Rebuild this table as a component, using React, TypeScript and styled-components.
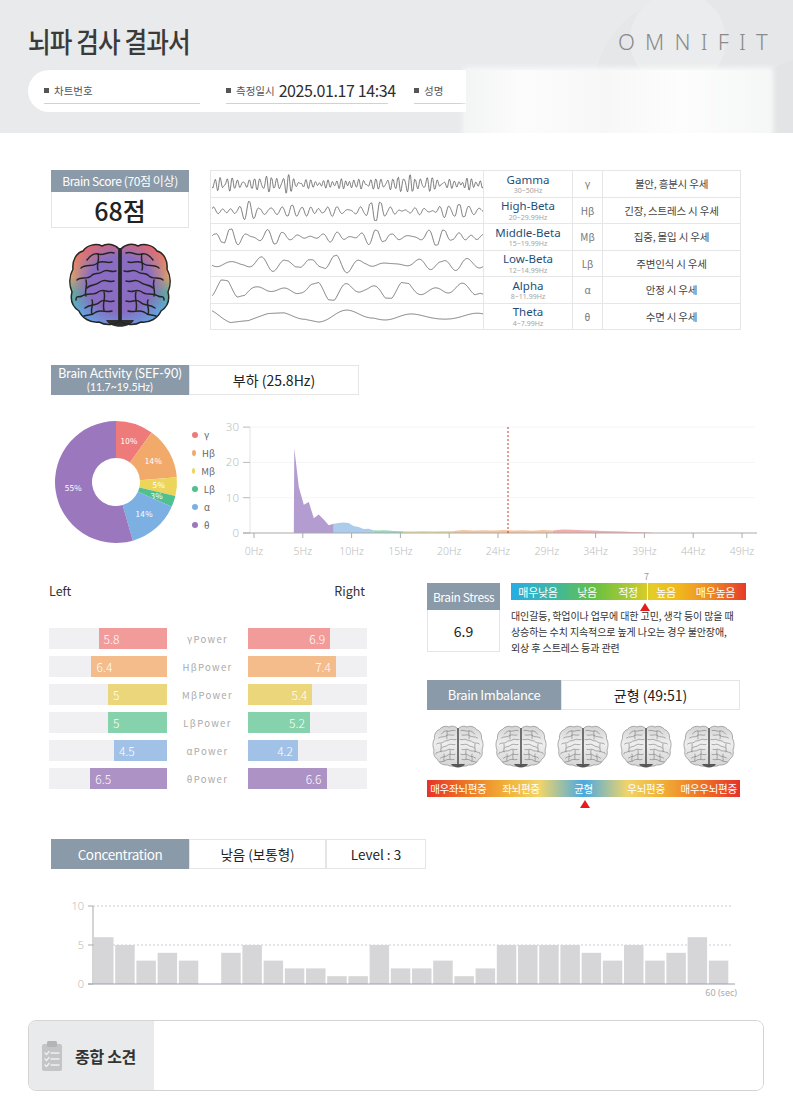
import React from 'react';
import styled, { createGlobalStyle } from 'styled-components';

const GlobalStyle = createGlobalStyle`
  html, body { margin: 0; padding: 0; background: #fff; }
  body { font-family: "Noto Sans CJK KR", "Noto Sans", sans-serif; color: #333; }
  * { box-sizing: border-box; }
  svg { display: block; }
`;

const SLATE = '#8a9aa8';

/* ---------------- helpers ---------------- */
function mulberry32(a: number) {
  return function () {
    a |= 0;
    a = (a + 0x6d2b79f5) | 0;
    let t = Math.imul(a ^ (a >>> 15), 1 | a);
    t = (t + Math.imul(t ^ (t >>> 7), 61 | t)) ^ t;
    return ((t ^ (t >>> 14)) >>> 0) / 4294967296;
  };
}

function wavePath(seed: number, period: number, amp: number, envP: number, w = 271, h = 26) {
  const r = mulberry32(seed);
  const comps = Array.from({ length: 3 }, () => ({
    p: period * (0.75 + r() * 0.5),
    ph: r() * Math.PI * 2,
    a: 0.6 + r() * 0.4,
  }));
  const e1 = { p: envP * (0.8 + r() * 0.4), ph: r() * 6.28 };
  const e2 = { p: envP * 0.45 * (0.8 + r() * 0.4), ph: r() * 6.28 };
  const sa = comps.reduce((s, c) => s + c.a, 0);
  let d = '';
  for (let x = 0; x <= w; x += 0.5) {
    let y = 0;
    for (const c of comps) y += c.a * Math.sin((2 * Math.PI * x) / c.p + c.ph);
    y /= sa * 0.6;
    const env =
      0.3 +
      0.7 *
        Math.abs(
          0.6 * Math.sin((2 * Math.PI * x) / e1.p + e1.ph) + 0.4 * Math.sin((2 * Math.PI * x) / e2.p + e2.ph)
        );
    const yy = h / 2 - Math.max(-1.2, Math.min(1.2, y)) * amp * env;
    d += (x === 0 ? 'M' : 'L') + x.toFixed(1) + ',' + yy.toFixed(2);
  }
  return d;
}

function arcPath(cx: number, cy: number, r0: number, r1: number, a0: number, a1: number) {
  const p = (r: number, a: number) => [cx + r * Math.sin(a), cy - r * Math.cos(a)];
  const large = a1 - a0 > Math.PI ? 1 : 0;
  const [x0, y0] = p(r1, a0);
  const [x1, y1] = p(r1, a1);
  const [x2, y2] = p(r0, a1);
  const [x3, y3] = p(r0, a0);
  return `M${x0},${y0} A${r1},${r1} 0 ${large} 1 ${x1},${y1} L${x2},${y2} A${r0},${r0} 0 ${large} 0 ${x3},${y3} Z`;
}

/* ---------------- layout ---------------- */
const Page = styled.div`
  width: 793px;
  min-height: 1118px;
  background: #fff;
  overflow: hidden;
`;

const Header = styled.header`
  position: relative;
  height: 133px;
  background: #e8eaeb;
  overflow: hidden;
`;

const HeaderDecor = styled.svg`
  position: absolute;
  right: 0;
  top: 0;
`;

const TitleRow = styled.div`
  position: relative;
  display: flex;
  justify-content: space-between;
  align-items: center;
  height: 70px;
  padding: 12px 25px 0 28px;
`;

const Title = styled.h1`
  margin: 0;
  font-size: 28px;
  font-weight: 500;
  letter-spacing: -1px;
  color: #3a3a3a;
  transform: scaleX(0.88);
  transform-origin: left center;
  white-space: nowrap;
`;

const Logo = styled.div`
  font-family: "Noto Sans", sans-serif;
  font-size: 22px;
  font-weight: 300;
  letter-spacing: 10.2px;
  margin-right: -10px;
  color: #8a8a8a;
`;

const InfoPill = styled.div`
  position: relative;
  display: flex;
  align-items: flex-end;
  gap: 26px;
  height: 42px;
  margin: 0 22px 0 28px;
  padding: 0 0 8px 16px;
  background: #fff;
  border-radius: 21px;
`;

const Field = styled.div<{ $w: number }>`
  display: flex;
  align-items: center;
  width: ${(p) => p.$w}px;
  height: 24px;
  border-bottom: 1px solid #d2d2d2;
  padding-bottom: 3px;
  white-space: nowrap;
`;

const FieldLabel = styled.span`
  font-size: 10.5px;
  color: #555;
  display: flex;
  align-items: center;
  &::before {
    content: '';
    width: 5px;
    height: 5px;
    background: #555;
    margin-right: 5px;
  }
`;

const FieldValue = styled.span`
  margin-left: 4px;
  font-size: 16px;
  letter-spacing: -0.4px;
  color: #2f2f2f;
`;

const Redaction = styled.div`
  position: absolute;
  left: 466px;
  top: 70px;
  width: 305px;
  height: 65px;
  background: linear-gradient(90deg, #f3f4f4 0%, #fcfcfc 18%, #f7f7f7 45%, #fdfdfd 70%, #f5f6f6 100%);
  box-shadow: 0 0 6px 2px rgba(255, 255, 255, 0.8);
`;

/* label/value boxes */
const LabelBox = styled.div<{ $w: number; $h: number; $fs: number }>`
  width: ${(p) => p.$w}px;
  height: ${(p) => p.$h}px;
  background: ${SLATE};
  color: #fff;
  font-size: ${(p) => p.$fs}px;
  letter-spacing: -0.4px;
  line-height: 1.1;
  display: flex;
  flex-direction: column;
  align-items: center;
  justify-content: center;
  white-space: nowrap;
`;

const LatinLine = styled.span<{ $fs: number }>`
  font-family: Lato, "Noto Sans", sans-serif;
  font-size: ${(p) => p.$fs}px;
  line-height: 1.2;
  letter-spacing: 0;
  display: block;
`;

const ValueBox = styled.div<{ $w: number; $h: number; $fs: number; $noTop?: boolean; $bold?: boolean }>`
  width: ${(p) => p.$w}px;
  height: ${(p) => p.$h}px;
  border: 1px solid #e5e5e5;
  ${(p) => (p.$noTop ? 'border-top: none;' : '')}
  background: #fff;
  font-size: ${(p) => p.$fs}px;
  font-weight: ${(p) => (p.$bold ? 500 : 400)};
  color: #222;
  display: flex;
  align-items: center;
  justify-content: center;
  white-space: nowrap;
`;

/* Section 1 */
const ScoreSection = styled.section`
  display: flex;
  gap: 21px;
  margin: 37px 0 0 51px;
`;

const ScoreCol = styled.div`
  width: 138px;
  display: flex;
  flex-direction: column;
`;

const BrainHolder = styled.div`
  margin: 12px 0 0 17px;
`;

const WaveGrid = styled.div`
  display: grid;
  grid-template-columns: 273px 89px 30px 138px;
  grid-template-rows: repeat(6, 1fr);
  height: 160px;
  border-top: 1px solid #e6e6e6;
  border-left: 1px solid #e6e6e6;
`;

const GridCell = styled.div<{ $align?: string }>`
  border-right: 1px solid #e6e6e6;
  border-bottom: 1px solid #e6e6e6;
  display: flex;
  flex-direction: column;
  align-items: ${(p) => p.$align || 'center'};
  justify-content: center;
  overflow: hidden;
`;

const WaveName = styled.span`
  font-family: "Noto Sans", sans-serif;
  font-size: 11.5px;
  color: #1e4f78;
  line-height: 1.37;
  display: block;
  margin-bottom: -1px;
`;

const WaveRange = styled.span`
  font-family: "Noto Sans", sans-serif;
  font-size: 7px;
  color: #a5a5a5;
  line-height: 1.37;
  display: block;
`;

const WaveSymbol = styled.span`
  font-size: 10px;
  color: #777;
`;

const WaveDesc = styled.span`
  font-size: 10.5px;
  color: #444;
  letter-spacing: -0.2px;
`;

/* Section 2 */
const ActivitySection = styled.section`
  margin: 35px 0 0 51px;
`;

const BoxRow = styled.div`
  display: flex;
`;

const ChartRow = styled.div`
  display: flex;
  align-items: flex-start;
  margin-top: 20px;
`;

const Legend = styled.ul`
  list-style: none;
  margin: 11px 0 0 11px;
  padding: 0;
  width: 23px;
`;

const LegendItem = styled.li<{ $c: string }>`
  height: 18px;
  display: flex;
  align-items: center;
  font-size: 9.5px;
  color: #666;
  white-space: nowrap;
  &::before {
    content: '';
    width: 6px;
    height: 6px;
    border-radius: 50%;
    background: ${(p) => p.$c};
    margin-right: 6px;
  }
`;

/* Section 3 */
const BalanceSection = styled.section`
  display: flex;
  gap: 60px;
  margin: 10px 0 0 49px;
`;

const PowerCol = styled.div`
  width: 318px;
`;

const LRHead = styled.div`
  display: flex;
  justify-content: space-between;
  margin-top: 8px;
  height: 16px;
  font-size: 12.5px;
  color: #333;
  line-height: 16px;
  padding-right: 2px;
`;

const PowerList = styled.div`
  display: flex;
  flex-direction: column;
  gap: 7px;
  margin-top: 29px;
`;

const PowerRow = styled.div`
  display: grid;
  grid-template-columns: 118px 81px 119px;
  height: 21px;
`;

const Track = styled.div<{ $side: 'L' | 'R' }>`
  background: #f0f0f3;
  display: flex;
  justify-content: ${(p) => (p.$side === 'L' ? 'flex-end' : 'flex-start')};
`;

const Bar = styled.div<{ $c: string; $side: 'L' | 'R' }>`
  height: 100%;
  background: ${(p) => p.$c};
  color: #fff;
  font-size: 12px;
  font-weight: 300;
  display: flex;
  align-items: center;
  justify-content: ${(p) => (p.$side === 'L' ? 'flex-start' : 'flex-end')};
  padding: 0 5px;
`;

const PowerLabel = styled.div`
  display: flex;
  align-items: center;
  justify-content: center;
  font-size: 9.5px;
  letter-spacing: 1.3px;
  color: #aaa;
  white-space: nowrap;
`;

const RightCol = styled.div`
  width: 319px;
`;

const StressBlock = styled.div`
  display: flex;
  gap: 11px;
  margin-top: 8px;
`;

const StressCol = styled.div`
  width: 73px;
  display: flex;
  flex-direction: column;
`;

const ScaleCol = styled.div`
  width: 235px;
`;

const StressScale = styled.div`
  position: relative;
  height: 17px;
  display: grid;
  grid-template-columns: 54px 44px 38px 38px 1fr;
  background: linear-gradient(90deg, #27ade3 0%, #3cb8a5 18%, #66c043 35%, #a9c934 50%, #e6cc26 60%, #f1b51f 72%, #ee8a22 85%, #e6392b 100%);
`;

const ScaleText = styled.span<{ $fs?: number }>`
  color: #fff;
  font-size: ${(p) => p.$fs || 11}px;
  letter-spacing: -0.3px;
  display: flex;
  align-items: center;
  justify-content: center;
  white-space: nowrap;
`;

const Marker = styled.div<{ $left: number }>`
  position: absolute;
  left: ${(p) => p.$left}px;
  top: 0;
  bottom: 0;
  width: 1px;
  background: rgba(255, 255, 255, 0.9);
`;

const MarkerNum = styled.span`
  position: absolute;
  left: -3px;
  top: -13px;
  font-size: 9px;
  color: #999;
`;

const Triangle = styled.div<{ $left: number }>`
  position: absolute;
  left: ${(p) => p.$left - 5}px;
  top: 20px;
  width: 0;
  height: 0;
  border-left: 5px solid transparent;
  border-right: 5px solid transparent;
  border-bottom: 8px solid #e31d1d;
`;

const StressDesc = styled.p`
  margin: 8px 0 0;
  font-size: 10px;
  line-height: 16px;
  color: #333;
  white-space: nowrap;
  letter-spacing: -0.1px;
`;

const ImbalanceBlock = styled.div`
  margin-top: 24px;
`;

const BrainsRow = styled.div`
  display: flex;
  justify-content: space-around;
  align-items: center;
  width: 313px;
  margin-top: 15px;
  height: 42px;
`;

const ImbalanceScale = styled.div`
  position: relative;
  width: 313px;
  height: 17px;
  margin-top: 13px;
  display: grid;
  grid-template-columns: repeat(5, 1fr);
  background: linear-gradient(90deg, #e5332a 0%, #ee7d27 14%, #f1b43a 26%, #f0d46a 36%, #4aa9e2 50%, #f0d46a 64%, #f1b43a 74%, #ee7d27 86%, #e5332a 100%);
`;

/* Section 4 */
const ConcentrationSection = styled.section`
  margin: 42px 0 0 51px;
`;

const ConcChart = styled.svg`
  display: block;
  margin-top: 26px;
`;

/* Section 5 */
const Summary = styled.section`
  display: flex;
  height: 71px;
  margin: 15px 29px 0 28px;
  border: 1.5px solid #d4d4d4;
  border-radius: 8px;
  overflow: hidden;
`;

const SummaryHead = styled.div`
  width: 125px;
  background: #e8eaeb;
  display: flex;
  align-items: center;
  gap: 12px;
  padding-left: 12px;
`;

const SummaryTitle = styled.span`
  font-size: 16px;
  font-weight: 700;
  color: #333;
  letter-spacing: -0.3px;
`;

const SummaryBody = styled.div`
  flex: 1;
  background: #fff;
`;

/* ---------------- drawings ---------------- */
const HEMI =
  'M51,9 C47,4 39,3 34,6 C28,3 19,5 15,11 C8,13 4,21 5,29 C1,36 1,45 4,52 C2,60 5,67 11,71 C14,78 22,83 31,82 C38,86 47,85 51,81 Z';
const GYRI = [
  'M46,13 C40,11 36,16 30,14 C26,13 22,16 19,20',
  'M44,22 C38,24 34,19 28,24 C24,27 18,24 13,28',
  'M48,31 C42,33 40,28 34,32 C30,35 26,32 23,36 C19,40 13,36 9,40',
  'M46,41 C40,43 38,38 32,42 C28,46 22,44 19,48',
  'M44,51 C38,53 36,48 30,52 C26,56 20,52 14,56 C10,58 8,55 8,60',
  'M46,61 C40,63 36,58 32,62 C28,66 22,64 17,68',
  'M44,71 C38,73 34,69 28,72 C24,76 20,74 16,76',
  'M30,14 C32,19 28,25 30,30',
  'M18,40 C20,46 16,51 18,56',
  'M36,52 C38,58 34,64 36,70',
  'M24,60 C26,64 22,70 24,74',
];

const Brain: React.FC<{ variant: 'color' | 'grey'; w: number; h: number }> = ({ variant, w, h }) => {
  const isColor = variant === 'color';
  const id = isColor ? 'bc' : 'bg';
  const stroke = isColor ? '#262626' : '#6e6e6e';
  const sw = isColor ? 1.5 : 1.1;
  return (
    <svg width={w} height={h} viewBox="0 0 104 88">
      <defs>
        <clipPath id={`${id}Clip`}>
          <path d={HEMI} />
          <path d={HEMI} transform="translate(104,0) scale(-1,1)" />
        </clipPath>
        <linearGradient id={`${id}Lin`} x1="0" y1="0" x2="0" y2="1">
          {isColor ? (
            <>
              <stop offset="0%" stopColor="#e8566c" />
              <stop offset="22%" stopColor="#ee8160" />
              <stop offset="42%" stopColor="#f1ad52" />
              <stop offset="60%" stopColor="#4fc08f" />
              <stop offset="80%" stopColor="#5aaee0" />
              <stop offset="100%" stopColor="#6aa3ea" />
            </>
          ) : (
            <>
              <stop offset="0%" stopColor="#cfcfcf" />
              <stop offset="45%" stopColor="#efefef" />
              <stop offset="100%" stopColor="#d2d2d2" />
            </>
          )}
        </linearGradient>
        <radialGradient id={`${id}Rad`} cx="0.5" cy="0.5" r="0.5">
          <stop offset="0%" stopColor="#8a6cc2" stopOpacity="1" />
          <stop offset="58%" stopColor="#8a6cc2" stopOpacity="1" />
          <stop offset="100%" stopColor="#8a6cc2" stopOpacity="0" />
        </radialGradient>
      </defs>
      <g clipPath={`url(#${id}Clip)`}>
        <rect x="0" y="0" width="104" height="88" fill={`url(#${id}Lin)`} />
        {isColor && <ellipse cx="52" cy="44" rx="54" ry="48" fill={`url(#${id}Rad)`} />}
      </g>
      <path d="M38,80 C42,89 62,89 66,80 Z" fill={isColor ? '#2e2e2e' : '#555'} />
      <rect x="50.5" y="8" width="3" height="76" fill={isColor ? '#2a2a2a' : '#4a4a4a'} />
      {[false, true].map((m) => (
        <g
          key={String(m)}
          transform={m ? 'translate(104,0) scale(-1,1)' : undefined}
          fill="none"
          stroke={stroke}
          strokeWidth={sw}
          strokeLinecap="round"
        >
          <path d={HEMI} />
          {GYRI.map((g, i) => (
            <path key={i} d={g} />
          ))}
        </g>
      ))}
    </svg>
  );
};

const ClipboardIcon = () => (
  <svg width="22" height="32" viewBox="0 0 22 32">
    <rect x="1" y="4" width="20" height="27" rx="2" fill="#c3c5c7" />
    <rect x="6" y="1" width="10" height="6" rx="1.5" fill="#b3b5b7" />
    <g stroke="#eef0f1" strokeWidth="1.4" fill="none" strokeLinecap="round">
      <path d="M4,13 l1.5,1.5 l2.5,-3" />
      <path d="M10,13 h8" />
      <path d="M4,19 l1.5,1.5 l2.5,-3" />
      <path d="M10,19 h8" />
      <path d="M4,25 l1.5,1.5 l2.5,-3" />
      <path d="M10,25 h8" />
    </g>
  </svg>
);

/* ---------------- data ---------------- */
const waves = [
  { name: 'Gamma', range: '30~50Hz', sym: 'γ', desc: '불안, 흥분시 우세', seed: 11, period: 5.5, amp: 9, env: 60 },
  { name: 'High-Beta', range: '20~29.99Hz', sym: 'Hβ', desc: '긴장, 스트레스 시 우세', seed: 23, period: 11, amp: 8, env: 80 },
  { name: 'Middle-Beta', range: '15~19.99Hz', sym: 'Mβ', desc: '집중, 몰입 시 우세', seed: 37, period: 16, amp: 7.5, env: 100 },
  { name: 'Low-Beta', range: '12~14.99Hz', sym: 'Lβ', desc: '주변인식 시 우세', seed: 41, period: 22, amp: 8, env: 130 },
  { name: 'Alpha', range: '8~11.99Hz', sym: 'α', desc: '안정 시 우세', seed: 53, period: 38, amp: 9, env: 160 },
  { name: 'Theta', range: '4~7.99Hz', sym: 'θ', desc: '수면 시 우세', seed: 67, period: 70, amp: 7, env: 220 },
];

const donut = [
  { sym: 'γ', v: 10, c: '#ee7b7a' },
  { sym: 'Hβ', v: 14, c: '#f2aa6b' },
  { sym: 'Mβ', v: 5, c: '#edd45b' },
  { sym: 'Lβ', v: 3, c: '#4fc08f' },
  { sym: 'α', v: 14, c: '#7cb0e3' },
  { sym: 'θ', v: 55, c: '#9b78bd' },
];

const bands: { c: string; pts: [number, number][] }[] = [
  {
    c: '#a58bc8',
    pts: [[4, 0], [4.05, 24], [4.5, 13], [5, 8], [5.5, 8.8], [6, 4.2], [6.5, 5.2], [7, 3.8], [7.5, 2.2], [8, 2.6]],
  },
  {
    c: '#9cc3e8',
    pts: [[8, 2.6], [8.5, 2.8], [9, 3.0], [9.5, 2.8], [10, 2.0], [10.5, 1.7], [11, 1.1], [11.5, 1.2], [12, 0.8]],
  },
  { c: '#86cfb2', pts: [[12, 0.8], [12.5, 0.7], [13, 0.8], [13.5, 0.7], [14, 0.6], [15, 0.5]] },
  { c: '#e9d77f', pts: [[15, 0.5], [16, 0.5], [17, 0.55], [18, 0.5], [19, 0.55], [20, 0.6]] },
  {
    c: '#f2bb8e',
    pts: [[20, 0.6], [21, 0.85], [22, 0.7], [23, 0.8], [24, 0.75], [25, 0.85], [26, 0.7], [27, 0.8], [28, 0.65], [29, 0.85], [30, 0.7]],
  },
  {
    c: '#ee9e9e',
    pts: [[30, 0.7], [31, 0.95], [32, 0.9], [33, 0.8], [34, 0.75], [35, 0.6], [36, 0.5], [37, 0.4], [38, 0.3], [39, 0.2], [40, 0.05]],
  },
];

const powers = [
  { label: 'γ', left: 5.8, right: 6.9, color: '#f29b9b' },
  { label: 'Hβ', left: 6.4, right: 7.4, color: '#f4bb8b' },
  { label: 'Mβ', left: 5, right: 5.4, color: '#ebd67c' },
  { label: 'Lβ', left: 5, right: 5.2, color: '#86d2ad' },
  { label: 'α', left: 4.5, right: 4.2, color: '#a1c2e6' },
  { label: 'θ', left: 6.5, right: 6.6, color: '#ad92c5' },
];

const concData = [6, 5, 3, 4, 3, 0, 4, 5, 3, 2, 2, 1, 1, 5, 2, 2, 3, 1, 2, 5, 5, 5, 5, 4, 3, 5, 3, 4, 6, 3];

/* ---------------- charts ---------------- */
const DonutChart = () => {
  const total = donut.reduce((s, d) => s + d.v, 0);
  const cx = 65;
  const cy = 67;
  let acc = 0;
  return (
    <svg width="130" height="135">
      {donut.map((d) => {
        const a0 = (acc / total) * Math.PI * 2;
        acc += d.v;
        const a1 = (acc / total) * Math.PI * 2;
        const mid = (a0 + a1) / 2;
        const lx = cx + 43 * Math.sin(mid);
        const ly = cy - 43 * Math.cos(mid);
        return (
          <g key={d.sym}>
            <path d={arcPath(cx, cy, 24, 61, a0, a1)} fill={d.c} />
            <text x={lx} y={ly + 3} fill="#fff" fontSize="8" textAnchor="middle" letterSpacing="0.4">
              {d.v}%
            </text>
          </g>
        );
      })}
    </svg>
  );
};

const SX = (f: number) => 39 + f * 9.96;
const SY = (v: number) => 118 - v * 3.53;

const SpectrumChart = () => {
  const xl = ['0Hz', '5Hz', '10Hz', '15Hz', '20Hz', '24Hz', '29Hz', '34Hz', '39Hz', '44Hz', '49Hz'];
  return (
    <svg width="545" height="150" fontFamily="Noto Sans, sans-serif">
      {[10, 20, 30].map((v) => (
        <line key={v} x1="35" x2="540" y1={SY(v)} y2={SY(v)} stroke="#f5f5f5" />
      ))}
      <line x1="35" x2="35" y1={SY(30)} y2={SY(0)} stroke="#e2e2e2" />
      {[0, 10, 20, 30].map((v) => (
        <g key={v}>
          <line x1="28" x2="35" y1={SY(v)} y2={SY(v)} stroke="#bbb" />
          <text x="24" y={SY(v) + 4} fontSize="11.5" fill="#bdbdbd" textAnchor="end" fontWeight="300">
            {v}
          </text>
        </g>
      ))}
      {bands.map((b, i) => {
        const pts = [[b.pts[0][0], 0], ...b.pts, [b.pts[b.pts.length - 1][0], 0]]
          .map(([f, v]) => `${SX(f).toFixed(1)},${SY(v).toFixed(1)}`)
          .join(' ');
        return <polygon key={i} points={pts} fill={b.c} opacity={0.85} />;
      })}
      <line x1="28" x2="542" y1={SY(0)} y2={SY(0)} stroke="#aaa" />
      {xl.map((l, i) => {
        const x = 39 + i * 48.8;
        return (
          <g key={l}>
            <line x1={x} x2={x} y1={SY(0)} y2={SY(0) + 5} stroke="#aaa" />
            <text x={x} y="140" fontSize="10.5" fill="#bdbdbd" textAnchor="middle" fontWeight="300">
              {l}
            </text>
          </g>
        );
      })}
      <line x1="293" x2="293" y1="12" y2={SY(0)} stroke="#c0392b" strokeDasharray="2 2" />
    </svg>
  );
};

const ConcentrationChart = () => {
  const y = (v: number) => 89 - v * 7.8;
  return (
    <ConcChart width="700" height="110" fontFamily="Noto Sans, sans-serif">
      {[10, 5].map((v) => (
        <line key={v} x1="42" x2="682" y1={y(v)} y2={y(v)} stroke="#c8ccd2" strokeDasharray="2 2" />
      ))}
      {concData.map((v, i) =>
        v > 0 ? <rect key={i} x={43 + i * 21.2} y={y(v)} width="19.5" height={v * 7.8} fill="#d6d6d8" /> : null
      )}
      <line x1="42" x2="42" y1={y(10)} y2={y(0)} stroke="#aaa" />
      <line x1="37" x2="684" y1={y(0)} y2={y(0)} stroke="#9aa0a8" />
      {[10, 5, 0].map((v) => (
        <g key={v}>
          <line x1="37" x2="42" y1={y(v)} y2={y(v)} stroke="#aaa" />
          <text x="33" y={y(v) + 4} fontSize="11" fill="#bbb" textAnchor="end" fontWeight="300">
            {v}
          </text>
        </g>
      ))}
      <text x="686" y="101" fontSize="9" fill="#aaa" textAnchor="end">
        60 (sec)
      </text>
    </ConcChart>
  );
};

/* ---------------- app ---------------- */
export default function App() {
  return (
    <Page>
      <GlobalStyle />
      <Header>
        <HeaderDecor width="230" height="133" viewBox="0 0 230 133">
          <path d="M40,133 C10,60 60,0 130,-10 L230,-10 L230,133 Z" fill="#e5e7e8" />
          <circle cx="115" cy="40" r="48" fill="#eaeced" />
          <path d="M150,133 C170,90 200,70 230,60 L230,133 Z" fill="#e2e4e5" />
        </HeaderDecor>
        <TitleRow>
          <Title>뇌파 검사 결과서</Title>
          <Logo>OMNIFIT</Logo>
        </TitleRow>
        <InfoPill>
          <Field $w={156}>
            <FieldLabel>차트번호</FieldLabel>
          </Field>
          <Field $w={162}>
            <FieldLabel>측정일시</FieldLabel>
            <FieldValue>2025.01.17 14:34</FieldValue>
          </Field>
          <Field $w={300}>
            <FieldLabel>성명</FieldLabel>
          </Field>
        </InfoPill>
        <Redaction />
      </Header>

      <ScoreSection>
        <ScoreCol>
          <LabelBox $w={138} $h={22} $fs={12}>
            Brain Score (70점 이상)
          </LabelBox>
          <ValueBox $w={138} $h={36} $fs={25} $noTop $bold>
            68점
          </ValueBox>
          <BrainHolder>
            <Brain variant="color" w={104} h={88} />
          </BrainHolder>
        </ScoreCol>
        <WaveGrid>
          {waves.map((w) => (
            <React.Fragment key={w.name}>
              <GridCell>
                <svg width="271" height="26">
                  <path d={wavePath(w.seed, w.period, w.amp, w.env)} fill="none" stroke="#5e5e5e" strokeWidth="0.8" />
                </svg>
              </GridCell>
              <GridCell>
                <WaveName>{w.name}</WaveName>
                <WaveRange>{w.range}</WaveRange>
              </GridCell>
              <GridCell>
                <WaveSymbol>{w.sym}</WaveSymbol>
              </GridCell>
              <GridCell>
                <WaveDesc>{w.desc}</WaveDesc>
              </GridCell>
            </React.Fragment>
          ))}
        </WaveGrid>
      </ScoreSection>

      <ActivitySection>
        <BoxRow>
          <LabelBox $w={138} $h={30} $fs={12.5}>
            <LatinLine $fs={12.5}>Brain Activity (SEF-90)</LatinLine>
            <LatinLine $fs={10.5}>(11.7~19.5Hz)</LatinLine>
          </LabelBox>
          <ValueBox $w={170} $h={30} $fs={14}>
            부하 (25.8Hz)
          </ValueBox>
        </BoxRow>
        <ChartRow>
          <DonutChart />
          <Legend>
            {donut.map((d) => (
              <LegendItem key={d.sym} $c={d.c}>
                {d.sym}
              </LegendItem>
            ))}
          </Legend>
          <SpectrumChart />
        </ChartRow>
      </ActivitySection>

      <BalanceSection>
        <PowerCol>
          <LRHead>
            <span>Left</span>
            <span>Right</span>
          </LRHead>
          <PowerList>
            {powers.map((p) => (
              <PowerRow key={p.label}>
                <Track $side="L">
                  <Bar $c={p.color} $side="L" style={{ width: `${(p.left / 10) * 118}px` }}>
                    {p.left}
                  </Bar>
                </Track>
                <PowerLabel>{p.label}Power</PowerLabel>
                <Track $side="R">
                  <Bar $c={p.color} $side="R" style={{ width: `${(p.right / 10) * 119}px` }}>
                    {p.right}
                  </Bar>
                </Track>
              </PowerRow>
            ))}
          </PowerList>
        </PowerCol>

        <RightCol>
          <StressBlock>
            <StressCol>
              <LabelBox $w={73} $h={27} $fs={12}>
                Brain Stress
              </LabelBox>
              <ValueBox $w={73} $h={42} $fs={14} $noTop>
                6.9
              </ValueBox>
            </StressCol>
            <ScaleCol>
              <StressScale>
                <ScaleText>매우낮음</ScaleText>
                <ScaleText>낮음</ScaleText>
                <ScaleText>적정</ScaleText>
                <ScaleText>높음</ScaleText>
                <ScaleText>매우높음</ScaleText>
                <Marker $left={136}>
                  <MarkerNum>7</MarkerNum>
                </Marker>
                <Triangle $left={134} />
              </StressScale>
              <StressDesc>
                대인갈등, 학업이나 업무에 대한 고민, 생각 등이 많을 때
                <br />
                상승하는 수치 지속적으로 높게 나오는 경우 불안장애,
                <br />
                외상 후 스트레스 등과 관련
              </StressDesc>
            </ScaleCol>
          </StressBlock>

          <ImbalanceBlock>
            <BoxRow>
              <LabelBox $w={134} $h={30} $fs={13}>
                Brain Imbalance
              </LabelBox>
              <ValueBox $w={179} $h={30} $fs={14}>
                균형 (49:51)
              </ValueBox>
            </BoxRow>
            <BrainsRow>
              {[0, 1, 2, 3, 4].map((i) => (
                <Brain key={i} variant="grey" w={52} h={44} />
              ))}
            </BrainsRow>
            <ImbalanceScale>
              <ScaleText $fs={10.5}>매우좌뇌편중</ScaleText>
              <ScaleText $fs={10.5}>좌뇌편중</ScaleText>
              <ScaleText $fs={10.5}>균형</ScaleText>
              <ScaleText $fs={10.5}>우뇌편중</ScaleText>
              <ScaleText $fs={10.5}>매우우뇌편중</ScaleText>
              <Triangle $left={158} />
            </ImbalanceScale>
          </ImbalanceBlock>
        </RightCol>
      </BalanceSection>

      <ConcentrationSection>
        <BoxRow>
          <LabelBox $w={138} $h={30} $fs={13.5}>
            Concentration
          </LabelBox>
          <ValueBox $w={137} $h={30} $fs={13.5}>
            낮음 (보통형)
          </ValueBox>
          <ValueBox $w={100} $h={30} $fs={13.5}>
            Level : 3
          </ValueBox>
        </BoxRow>
        <ConcentrationChart />
      </ConcentrationSection>

      <Summary>
        <SummaryHead>
          <ClipboardIcon />
          <SummaryTitle>종합 소견</SummaryTitle>
        </SummaryHead>
        <SummaryBody />
      </Summary>
    </Page>
  );
}
